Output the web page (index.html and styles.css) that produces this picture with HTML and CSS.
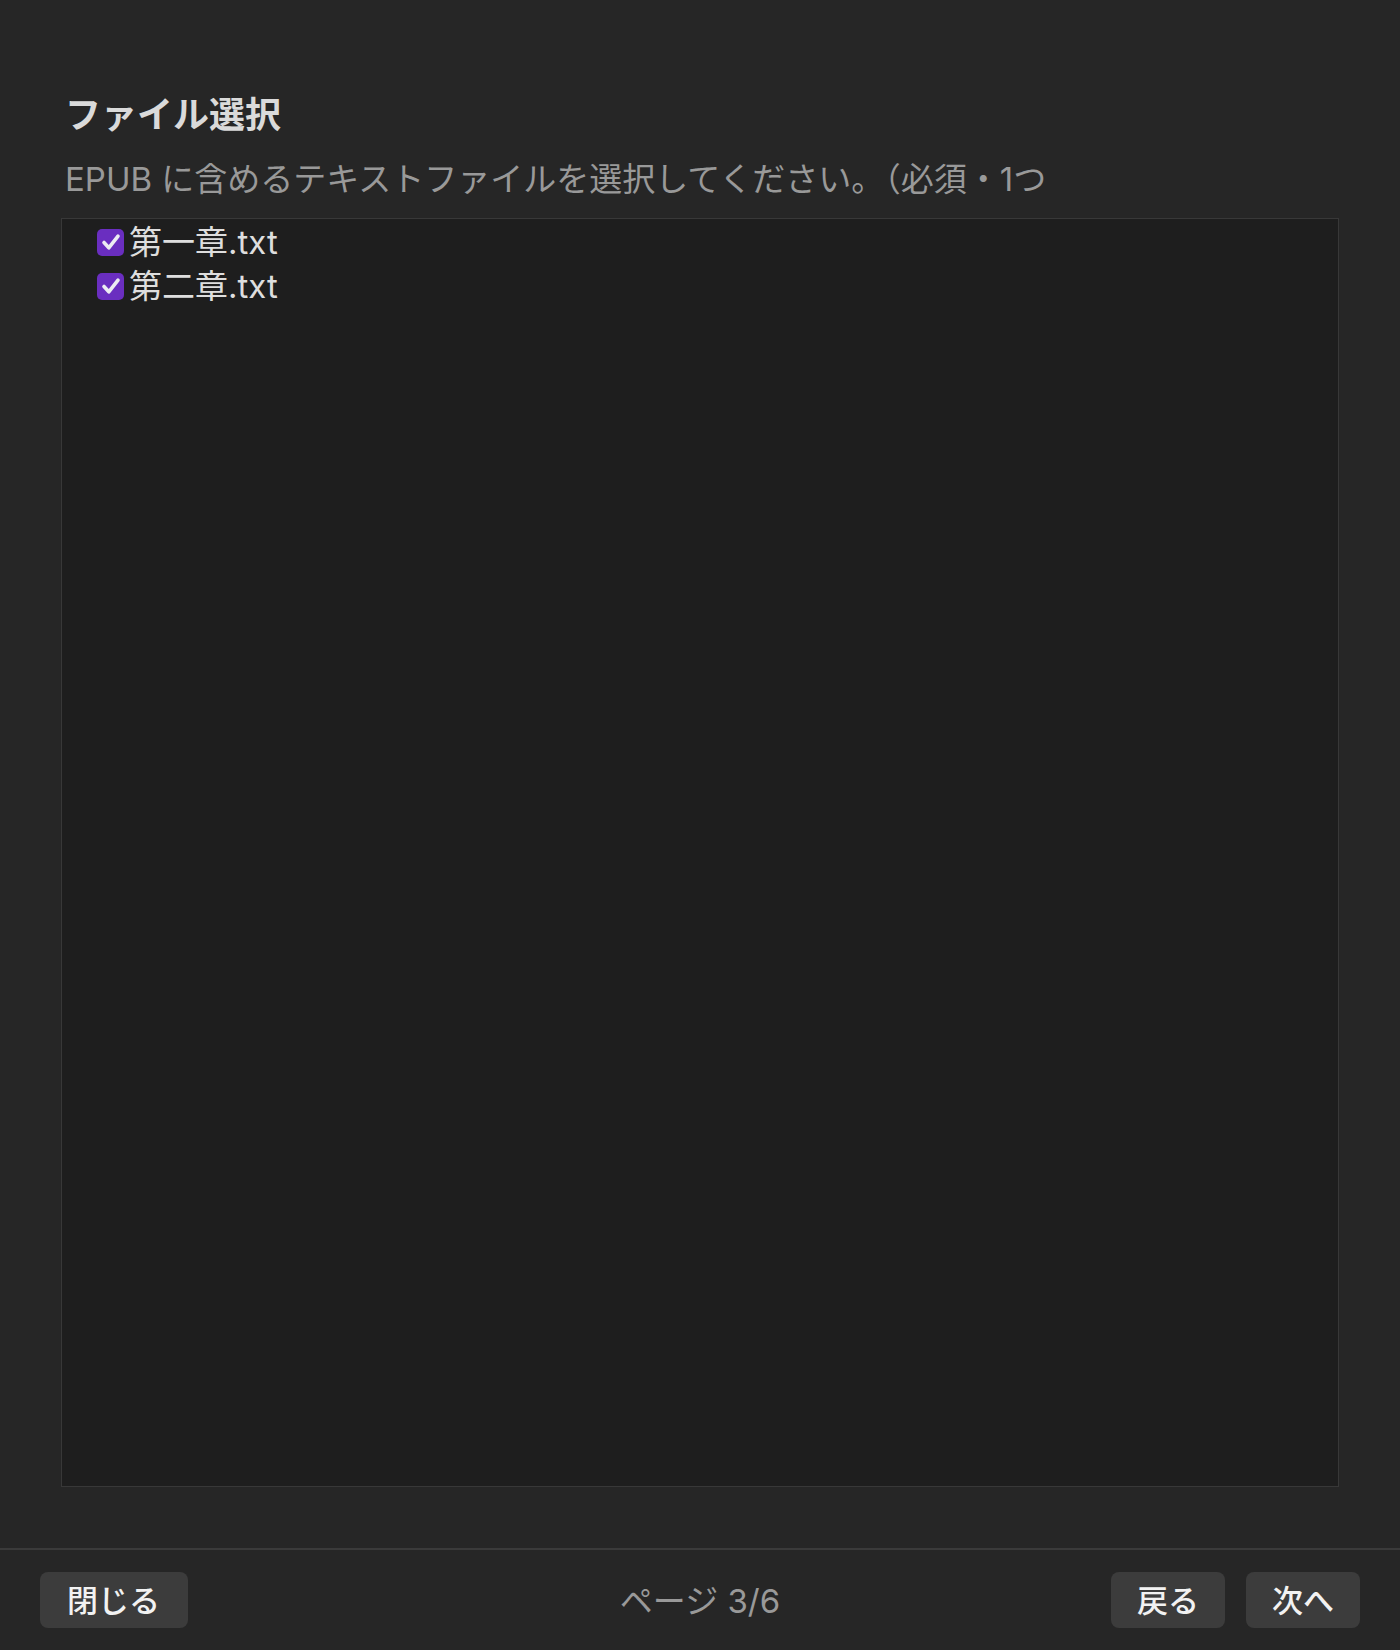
FILE: index.html
```html
<!DOCTYPE html>
<html lang="ja">
<head>
<meta charset="utf-8">
<title>ファイル選択</title>
<link rel="stylesheet" href="styles.css">
</head>
<body>
<div class="modal">
  <div class="content">
    <h2 class="title">ファイル選択</h2>
    <p class="desc">EPUB に含めるテキストファイルを選択してください。（必須・1つ</p>
    <div class="file-list">
      <label class="file-item">
        <span class="check"><svg viewBox="0 0 26 26" width="26" height="26"><path d="M6 13.5 L10.8 18.8 L20 7.2" fill="none" stroke="#ececf2" stroke-width="3.6" stroke-linecap="round" stroke-linejoin="round"/></svg></span>
        <span class="name">第一章.txt</span>
      </label>
      <label class="file-item">
        <span class="check"><svg viewBox="0 0 26 26" width="26" height="26"><path d="M6 13.5 L10.8 18.8 L20 7.2" fill="none" stroke="#ececf2" stroke-width="3.6" stroke-linecap="round" stroke-linejoin="round"/></svg></span>
        <span class="name">第二章.txt</span>
      </label>
    </div>
  </div>
  <div class="footer">
    <div class="left">
      <button class="btn btn-close">閉じる</button>
    </div>
    <span class="page">ページ 3/6</span>
    <div class="right">
      <button class="btn">戻る</button>
      <button class="btn">次へ</button>
    </div>
  </div>
</div>
</body>
</html>
```
FILE: styles.css
```css
html, body {
  margin: 0;
  padding: 0;
  background: #262626;
}
body {
  font-family: "Inter", "Noto Sans CJK JP", sans-serif;
  color: #dcdcdc;
}
.modal {
  height: 1650px;
  display: flex;
  flex-direction: column;
}
.content {
  flex: 1;
  display: flex;
  flex-direction: column;
  padding: 93px 61px 61px 61px;
}
.title {
  margin: 0;
  padding-left: 4px;
  font-size: 36px;
  line-height: 44px;
  font-weight: 700;
  color: #dadada;
}
.desc {
  margin: 20px 0 0 0;
  padding-left: 4px;
  font-size: 33px;
  line-height: 44px;
  color: #999999;
}
.file-list {
  margin-top: 17px;
  flex: 1;
  background: #1e1e1e;
  border: 1px solid #383838;
  padding: 1px 0 0 35px;
  display: flex;
  flex-direction: column;
}
.file-item {
  display: flex;
  align-items: center;
  gap: 5px;
  height: 44px;
}
.check {
  width: 27px;
  height: 27px;
  border-radius: 5px;
  background: #6a2ec0;
  display: flex;
  align-items: center;
  justify-content: center;
}
.name {
  font-size: 33px;
  line-height: 44px;
  color: #dedede;
}
.footer {
  border-top: 2px solid #3a3a3a;
  padding: 22px 40px 22px 40px;
  display: grid;
  grid-template-columns: 1fr auto 1fr;
  align-items: center;
}
.left {
  display: flex;
  justify-content: flex-start;
}
.right {
  display: flex;
  justify-content: flex-end;
  gap: 21px;
}
.btn {
  font-family: "Inter", "Noto Sans CJK JP", sans-serif;
  font-size: 31px;
  height: 56px;
  padding: 0 26px 3px 26px;
  border: none;
  border-radius: 8px;
  background: #3c3c3c;
  color: #f2f2f2;
  font-weight: 500;
}
.btn-close {
  padding-left: 27px;
  padding-right: 28px;
}
.page {
  font-size: 33px;
  color: #999999;
  padding-bottom: 2px;
}
```
